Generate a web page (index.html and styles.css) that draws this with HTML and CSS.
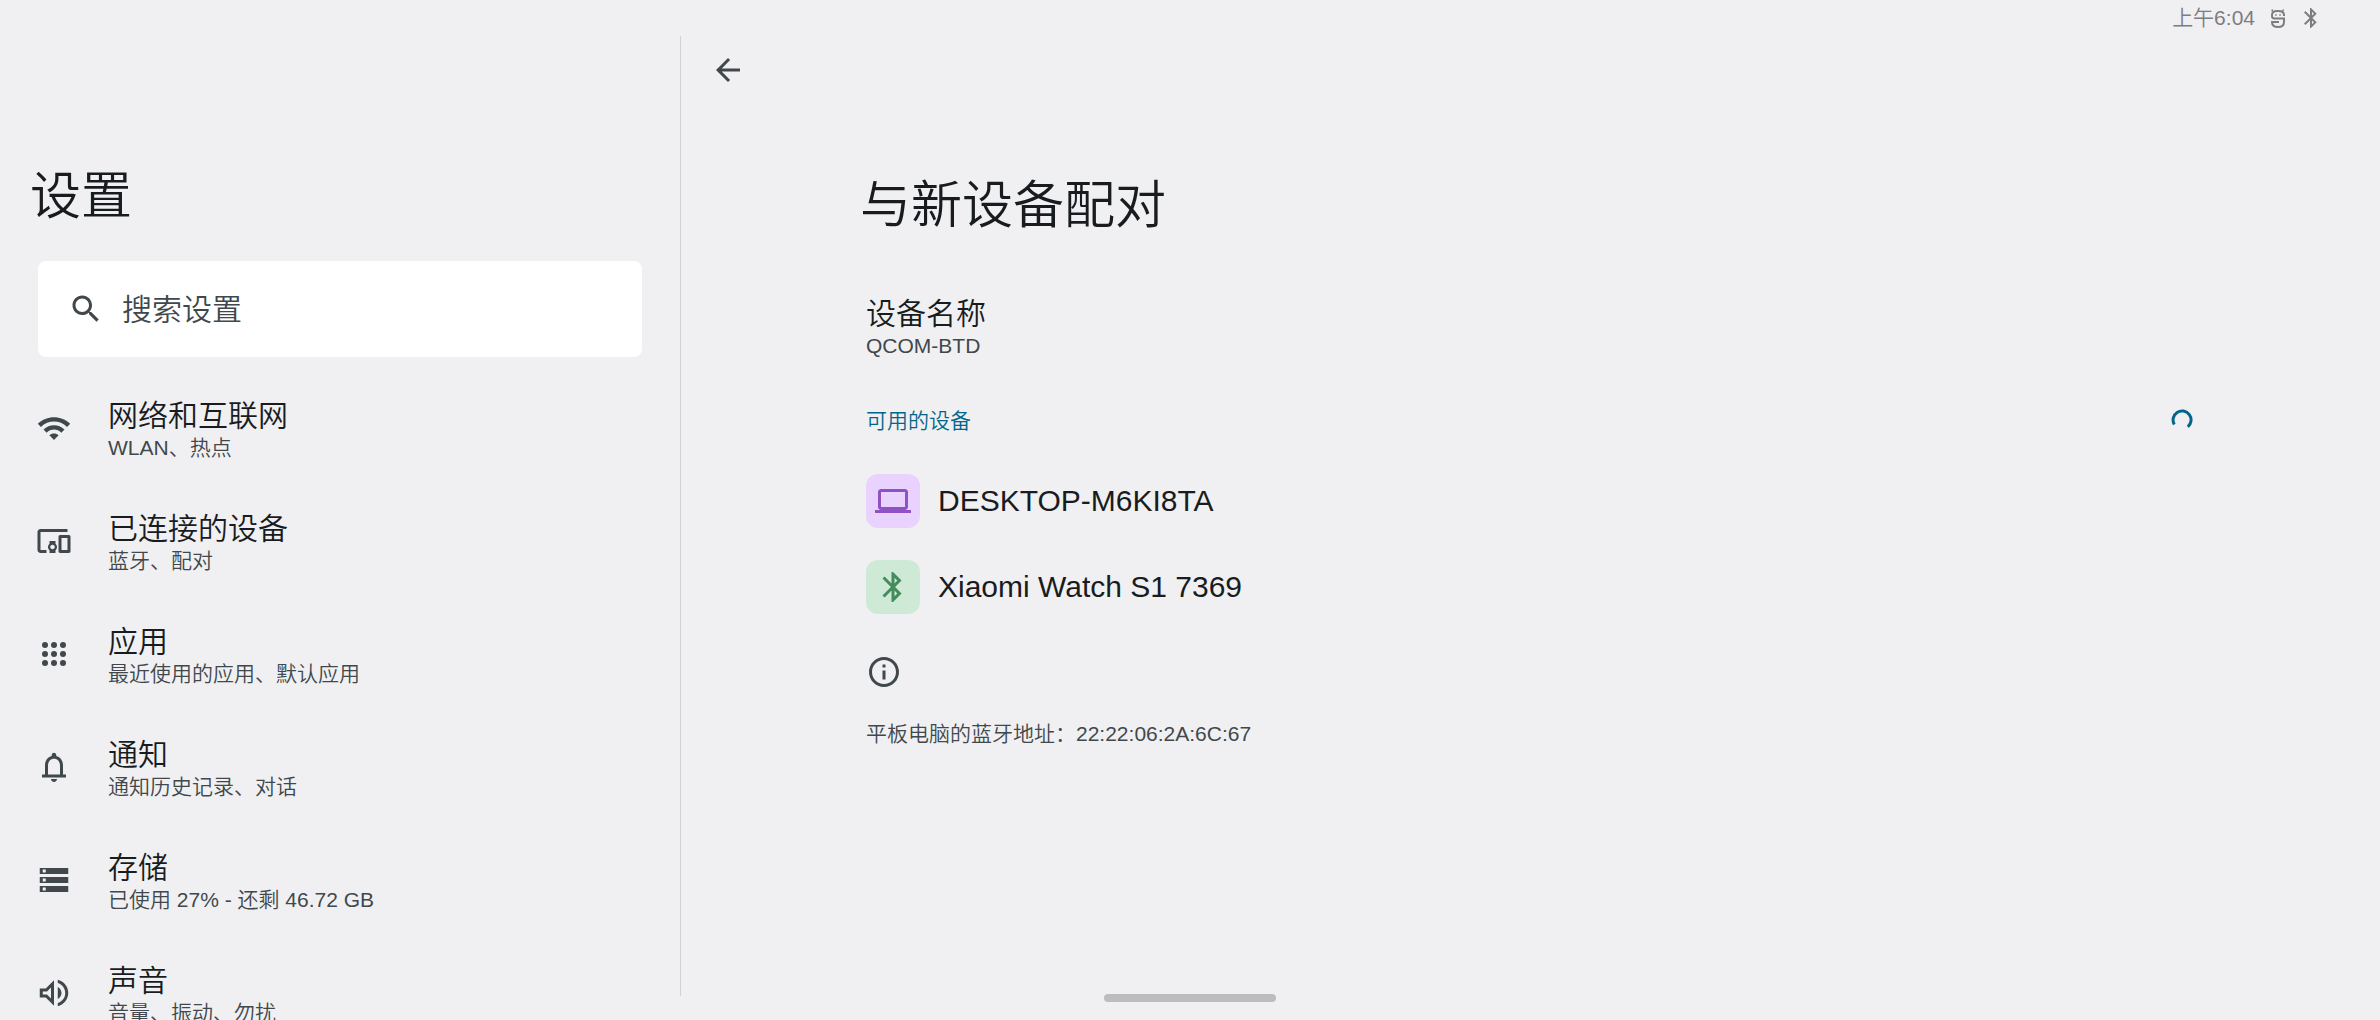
FILE: index.html
```html
<!DOCTYPE html>
<html lang="zh-CN">
<head>
    <meta charset="UTF-8">
    <meta name="viewport" content="width=device-width, initial-scale=1.0">
    <title>设置</title>
    <link rel="stylesheet" href="styles.css">
</head>
<body>
    <header class="status-bar">
        <span>上午6:04</span>
        <svg class="status-icon" viewBox="0 0 20 24" fill="none" stroke="currentColor" stroke-width="2">
            <path d="M16 10V9C16 6.500 14 5 10 5H9C5.500 5 4 6.500 4 9V10C4 12 5 12.500 6.500 12.500H16V16C16 19.500 14 21 10 21S4 19.500 4 16H11"/>
            <path stroke-width="1.500" d="M4.500 5.500L4 3.500M14.500 5.500L15.500 3.500M7.200 9H8.700M11.300 9H12.800"/>
        </svg>
        <svg class="status-icon" viewBox="0 0 20 24" fill="currentColor">
            <path d="M15.700 7.700L10 2H9v7.600L4.400 5L3 6.400L8.600 12L3 17.600L4.400 19L9 14.400V22h1l5.700-5.700L11.400 12zM11 5.800l1.900 1.900L11 9.600zm1.900 10.500L11 18.200v-3.800z"/>
        </svg>
    </header>

    <div class="layout">
        <aside class="sidebar">
            <h1 class="title">设置</h1>
            <label class="search">
                <svg class="icon" viewBox="0 0 24 24"><path d="M15.500 14h-.79l-.28-.27C15.410 12.590 16 11.110 16 9.500 16 5.910 13.090 3 9.500 3S3 5.910 3 9.500 5.910 16 9.500 16c1.610 0 3.090-.59 4.230-1.570l.27.28v.79l5 4.990L20.490 19l-4.990-5zm-6 0C7.010 14 5 11.990 5 9.500S7.010 5 9.500 5 14 7.010 14 9.500 11.990 14 9.500 14z"/></svg>
                <input type="text" placeholder="搜索设置" aria-label="搜索设置">
            </label>
            <nav class="menu">
                <a class="menu-item" href="#">
                    <svg class="icon" viewBox="0 0 24 24"><path d="M1.200 9.200L3.300 11.300C8.100 6.500 15.900 6.500 20.700 11.300L22.800 9.200C16.800 3.300 7.200 3.300 1.200 9.200zM5 13L7.100 15.100C9.800 12.400 14.200 12.400 16.900 15.100L19 13C15.100 9.200 8.900 9.200 5 13zM8.900 16.900L12 20L15.100 16.900C13.400 15.200 10.600 15.200 8.900 16.900z"/></svg>
                    <span class="item-text"><span class="item-title">网络和互联网</span><span class="item-sub">WLAN、热点</span></span>
                </a>
                <a class="menu-item" href="#">
                    <svg class="icon" viewBox="0 0 24 24"><path d="M3 6h18V4H3c-1.100 0-2 .9-2 2v12c0 1.100.9 2 2 2h4v-2H3V6zm10 6H9v1.780c-.61.550-1 1.330-1 2.220s.39 1.670 1 2.220V20h4v-1.780c.61-.550 1-1.340 1-2.220s-.39-1.670-1-2.220V12zm-2 5.500c-.83 0-1.500-.67-1.500-1.500s.67-1.500 1.500-1.500 1.500.67 1.500 1.500-.67 1.500-1.500 1.500zM22 8h-6c-.5 0-1 .5-1 1v10c0 .5.5 1 1 1h6c.5 0 1-.5 1-1V9c0-.5-.5-1-1-1zm-1 10h-4v-8h4v8z"/></svg>
                    <span class="item-text"><span class="item-title">已连接的设备</span><span class="item-sub">蓝牙、配对</span></span>
                </a>
                <a class="menu-item" href="#">
                    <svg class="icon" viewBox="0 0 24 24">
                        <circle cx="6" cy="6" r="2"/><circle cx="12" cy="6" r="2"/><circle cx="18" cy="6" r="2"/>
                        <circle cx="6" cy="12" r="2"/><circle cx="12" cy="12" r="2"/><circle cx="18" cy="12" r="2"/>
                        <circle cx="6" cy="18" r="2"/><circle cx="12" cy="18" r="2"/><circle cx="18" cy="18" r="2"/>
                    </svg>
                    <span class="item-text"><span class="item-title">应用</span><span class="item-sub">最近使用的应用、默认应用</span></span>
                </a>
                <a class="menu-item" href="#">
                    <svg class="icon" viewBox="0 0 24 24"><path d="M18 17v-6c0-3.070-1.630-5.640-4.500-6.320V4c0-.83-.67-1.500-1.500-1.500S10.500 3.170 10.500 4v.68C7.640 5.360 6 7.920 6 11v6H4v2h16v-2h-2zm-2 0H8v-6c0-2.480 1.510-4.500 4-4.500s4 2.020 4 4.500v6zM12 22c1.100 0 2-.9 2-2h-4c0 1.100.9 2 2 2z"/></svg>
                    <span class="item-text"><span class="item-title">通知</span><span class="item-sub">通知历史记录、对话</span></span>
                </a>
                <a class="menu-item" href="#">
                    <svg class="icon" viewBox="0 0 24 24"><path fill-rule="evenodd" d="M2.500 20h19v-4h-19v4zm2-3h2v2h-2v-2zM2.500 4v4h19V4h-19zm4 3h-2V5h2v2zm-4 7h19v-4h-19v4zm2-3h2v2h-2v-2z"/></svg>
                    <span class="item-text"><span class="item-title">存储</span><span class="item-sub">已使用 27% - 还剩 46.72 GB</span></span>
                </a>
                <a class="menu-item" href="#">
                    <svg class="icon" viewBox="0 0 24 24"><path d="M2.500 9v6h4l5.500 5.500V3.500L6.500 9h-4zM10 8.330v7.340L7.330 13H4.500v-2h2.830L10 8.330zM17 12c0-1.770-1.020-3.290-2.500-4.030v8.050C15.980 15.290 17 13.770 17 12zM14.500 3.230v2.060c2.890.86 5 3.540 5 6.710s-2.110 5.850-5 6.710v2.060c4.010-.91 7-4.490 7-8.770s-2.990-7.860-7-8.770z"/></svg>
                    <span class="item-text"><span class="item-title">声音</span><span class="item-sub">音量、振动、勿扰</span></span>
                </a>
            </nav>
        </aside>

        <main class="content">
            <button class="back" type="button" aria-label="返回">
                <svg class="icon" viewBox="0 0 24 24"><path d="M20 11H7.830l5.590-5.590L12 4l-8 8 8 8 1.410-1.410L7.830 13H20v-2z"/></svg>
            </button>
            <div class="page">
                <h2 class="title">与新设备配对</h2>
                <div class="item-text device-name">
                    <span class="item-title">设备名称</span>
                    <span class="item-sub">QCOM-BTD</span>
                </div>
                <div class="section-head">
                    <h3>可用的设备</h3>
                    <svg class="spinner" viewBox="0 0 22 22"><path d="M3.300 15.500A9 9 0 1 1 16.800 17.900"/></svg>
                </div>
                <button class="device" type="button">
                    <span class="badge purple"><svg class="icon" viewBox="0 0 24 24"><path d="M20 18c1.100 0 1.990-.9 1.990-2L22 6c0-1.100-.9-2-2-2H4c-1.100 0-2 .9-2 2v10c0 1.100.9 2 2 2H0v2h24v-2h-4zM4 6h16v10H4V6z"/></svg></span>
                    DESKTOP-M6KI8TA
                </button>
                <button class="device" type="button">
                    <span class="badge green"><svg class="icon" viewBox="0 0 24 24"><path d="M17.710 7.710L12 2h-1v7.590L6.410 5 5 6.410 10.590 12 5 17.590 6.410 19 11 14.410V22h1l5.710-5.710-4.300-4.290 4.300-4.290zM13 5.830l1.880 1.880L13 9.590V5.830zm1.880 10.460L13 18.170v-3.760l1.880 1.880z"/></svg></span>
                    Xiaomi Watch S1 7369
                </button>
                <div class="footer-info">
                    <svg class="icon" viewBox="0 0 24 24"><path d="M11 7h2v2h-2zm0 4h2v6h-2zm1-9C6.480 2 2 6.480 2 12s4.480 10 10 10 10-4.480 10-10S17.520 2 12 2zm0 18c-4.410 0-8-3.590-8-8s3.590-8 8-8 8 3.590 8 8-3.590 8-8 8z"/></svg>
                    <p>平板电脑的蓝牙地址：22:22:06:2A:6C:67</p>
                </div>
            </div>
        </main>
    </div>
    <div class="home-bar"></div>
</body>
</html>
```
FILE: styles.css
```css
* {
    box-sizing: border-box;
}
body {
    margin: 0;
    height: 100vh;
    overflow: hidden;
    display: flex;
    flex-direction: column;
    background-color: #f0f0f2;
    color: #191c1e;
    font-family: "Liberation Sans", "Noto Sans CJK SC", sans-serif;
    font-weight: 350;
}
h1, h2, h3, p {
    margin: 0;
    font-weight: 350;
}
button {
    border: 0;
    padding: 0;
    background: none;
    color: inherit;
    font: inherit;
    text-align: left;
    cursor: pointer;
}
.icon {
    width: 36px;
    height: 36px;
    flex: none;
    display: block;
    fill: #40484c;
}

/* status bar */
.status-bar {
    height: 36px;
    flex: none;
    display: flex;
    justify-content: flex-end;
    align-items: center;
    gap: 13px;
    padding-right: 59px;
    font-size: 21px;
    line-height: 24px;
    color: #7d7d7f;
}
.status-icon {
    width: 20px;
    height: 24px;
}

.layout {
    flex: 1;
    min-height: 0;
    display: grid;
    grid-template-columns: 2fr 5fr;
}
.title {
    font-size: 51px;
    line-height: 60px;
}

/* left column */
.sidebar {
    overflow: hidden;
    padding: 131px 38px 0;
}
.sidebar .title {
    margin-left: -8px;
}
.search {
    display: flex;
    align-items: center;
    gap: 18px;
    height: 96px;
    margin-top: 34px;
    padding: 0 30px;
    border-radius: 8px;
    background-color: #fff;
}
.search input {
    flex: 1;
    min-width: 0;
    border: 0;
    padding: 2px 0 0;
    outline: none;
    background: none;
    font: inherit;
    font-size: 30px;
    color: #40484c;
}
.search input::placeholder {
    color: #40484c;
    opacity: 1;
}
.menu {
    margin-top: 14px;
}
.menu-item {
    display: flex;
    align-items: center;
    gap: 36px;
    height: 113px;
    margin-left: -2px;
    color: inherit;
    text-decoration: none;
}
.item-text {
    display: flex;
    flex-direction: column;
}
.menu .item-text {
    padding-top: 2px;
}
.item-title {
    font-size: 30px;
    line-height: 38px;
}
.item-sub {
    font-size: 21px;
    line-height: 26px;
    color: #40484c;
}

/* right column */
.content {
    margin-bottom: 24px;
    border-left: 1px solid #d0d1d3;
    padding-top: 16px;
}
.back {
    margin-left: 29px;
}
.page {
    padding: 84px 187px 0 185px;
}
.page .title {
    margin-left: -6px;
}
.device-name {
    margin-top: 59px;
}
.section-head {
    display: flex;
    justify-content: space-between;
    align-items: center;
    height: 54px;
    margin: 34px 0 27px;
}
.section-head h3 {
    padding-bottom: 2px;
    font-size: 21px;
    color: #00668b;
}
.spinner {
    width: 22px;
    height: 22px;
    fill: none;
    stroke: #00668b;
    stroke-width: 3;
}
.device {
    display: flex;
    align-items: center;
    gap: 18px;
    width: 100%;
    margin-bottom: 32px;
    font-size: 30px;
}
.badge {
    padding: 9px;
    border-radius: 12px;
}
.purple {
    background-color: #e9d2fd;
}
.purple .icon {
    fill: #8e52c4;
}
.green {
    background-color: #ceead6;
}
.green .icon {
    fill: #448c5c;
}
.footer-info {
    padding-top: 8px;
}
.footer-info p {
    margin-top: 30px;
    font-size: 21px;
    line-height: 28px;
    color: #40484c;
}

/* gesture handle over the page */
.home-bar {
    position: absolute;
    left: 50%;
    bottom: 18px;
    width: 172px;
    height: 8px;
    margin-left: -86px;
    border-radius: 4px;
    background-color: #bdbdbd;
}
```
